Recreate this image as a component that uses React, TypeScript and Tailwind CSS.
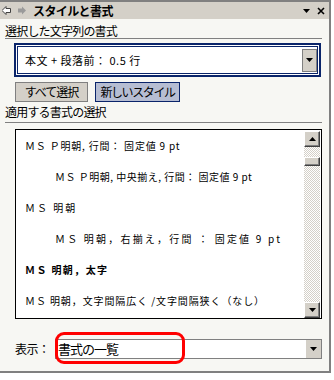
const jp = "font-['Noto_Sans_CJK_JP',sans-serif]";

function Down({ size = 7 }: { size?: number }) {
  return (
    <svg width={size} height={Math.ceil(size / 2)} viewBox="0 0 7 4">
      <polygon points="0,0 7,0 3.5,4" fill="#000" />
    </svg>
  );
}

function Up() {
  return (
    <svg width="7" height="4" viewBox="0 0 7 4">
      <polygon points="0,4 7,4 3.5,0" fill="#000" />
    </svg>
  );
}

const scrollBtn =
  "h-[16px] w-[16px] flex items-center justify-center bg-[#d4d0c8] border border-t-white border-l-white border-r-[#404040] border-b-[#404040] shadow-[inset_-1px_-1px_#808080]";

const items = [
  { text: "ＭＳ Ｐ明朝, 行間： 固定値 9 pt", indent: false, cls: "tracking-[0.8px]" },
  { text: "ＭＳ Ｐ明朝, 中央揃え, 行間： 固定値 9 pt", indent: true, cls: "tracking-[0.5px]" },
  { text: "ＭＳ 明朝", indent: false, cls: "tracking-[2px]" },
  { text: "ＭＳ 明朝，右揃え，行間 ： 固定値 9 pt", indent: true, cls: "tracking-[2.2px]" },
  { text: "ＭＳ 明朝，太字", indent: false, cls: "tracking-[1.4px] font-bold" },
  { text: "ＭＳ 明朝，文字間隔広く /文字間隔狭く（なし）", indent: false, cls: "tracking-[0.9px]" },
];

export default function App() {
  return (
    <div className={`relative w-[334px] h-[380px] overflow-hidden bg-white text-black ${jp}`}>
      <div className="w-[331px] h-[373px] border-t-2 border-r-2 border-b-2 border-[#808080] bg-[#f7f7f3] flex flex-col">
        {/* Title bar */}
        <div className="h-[17px] bg-[#d4d0c8] flex items-center shrink-0">
          <svg className="ml-[2px]" width="9" height="9" viewBox="0 0 9 9">
            <polygon points="0,4.5 4,0.5 4,2.5 8.5,2.5 8.5,6.5 4,6.5 4,8.5" fill="#ffffff" stroke="#404040" strokeWidth="1" />
          </svg>
          <svg className="ml-[7px]" width="8" height="9" viewBox="0 0 8 9">
            <polygon points="8,4.5 4,0.5 4,2.5 0,2.5 0,6.5 4,6.5 4,8.5" fill="#9a9a9a" />
          </svg>
          <span className="ml-[7px] text-[12px] leading-[14px] font-bold tracking-[-0.6px]">スタイルと書式</span>
          <span className="ml-auto mr-[7px] flex items-center">
            <Down />
          </span>
          <svg className="mr-[4px]" width="8" height="8" viewBox="0 0 8 8">
            <path d="M1 1 L7 7 M7 1 L1 7" stroke="#000" strokeWidth="1.6" />
          </svg>
        </div>

        {/* Section 1 */}
        <div className="ml-[5px] w-[317px] h-[20px] border-b border-[#808080] pt-[5px] text-[12px] leading-[14px] tracking-[-0.8px] shrink-0">
          選択した文字列の書式
        </div>
        <div className="ml-[14px] mt-[4px] w-[307px] h-[34px] border-2 border-[#0a246a] bg-white p-px shrink-0">
          <div className="h-full border border-[#0a246a] flex items-center pl-[7px]">
            <span className="text-[11px] leading-[14px] tracking-[0.5px]">本文 + 段落前： 0.5 行</span>
            <div className="ml-auto h-[23px] w-[15px] bg-[#d4d0c8] border border-[#808080] flex items-center justify-center">
              <Down />
            </div>
          </div>
        </div>
        <div className="ml-[15px] mt-[5px] flex gap-[7px] shrink-0">
          <div className="w-[73px] h-[20px] bg-[#d4d0c8] border border-[#808080] flex items-center justify-center text-[12px] leading-[14px] tracking-[-1px]">
            すべて選択
          </div>
          <div className="w-[85px] h-[20px] bg-[#b6bdd2] border border-[#0a246a] flex items-center justify-center text-[12px] leading-[14px] tracking-[-1.4px]">
            新しいスタイル
          </div>
        </div>

        {/* Section 2 */}
        <div className="ml-[5px] w-[317px] h-[21px] border-b border-[#808080] pt-[3px] text-[12px] leading-[14px] tracking-[-0.8px] shrink-0">
          適用する書式の選択
        </div>
        <div className="ml-[15px] mt-[6px] w-[307px] h-[190px] border border-black bg-white flex shrink-0">
          <div className="flex-1 flex flex-col">
            {items.map((it, i) => (
              <div
                key={i}
                className={`h-[31px] flex items-center whitespace-nowrap text-[10px] leading-[12px] ${it.indent ? "pl-[39px]" : "pl-[9px]"} ${it.cls}`}
              >
                {it.text}
              </div>
            ))}
          </div>
          <div className="mt-px mr-px w-[16px] h-[187px] flex flex-col">
            <div className={scrollBtn}>
              <Up />
            </div>
            <div className="flex-1 bg-[repeating-conic-gradient(#d4d0c8_0_25%,#ffffff_0_50%)] bg-[length:2px_2px]">
              <div className="mt-[10px] h-[9px] w-[16px] bg-[#d4d0c8] border border-t-white border-l-white border-r-[#404040] border-b-[#404040] shadow-[inset_-1px_-1px_#808080]" />
            </div>
            <div className={scrollBtn}>
              <Down />
            </div>
          </div>
        </div>

        {/* Display row */}
        <div className="ml-[15px] mt-[20px] h-[20px] flex items-center shrink-0">
          <span className="w-[40px] text-[12px] leading-[14px] tracking-[-0.5px]">表示：</span>
          <div className="w-[267px] h-[20px] border border-[#808080] bg-white flex items-center">
            <span className="pl-[2px] text-[13px] leading-[16px] tracking-[-1px]">書式の一覧</span>
            <div className="ml-auto h-full w-[15px] bg-[#d4d0c8] flex items-center justify-center">
              <Down />
            </div>
          </div>
        </div>
      </div>

      {/* Highlight */}
      <div className="absolute left-[55px] top-[332px] w-[130px] h-[32px] border-[3px] border-[#ff0000] rounded-[9px]" />
    </div>
  );
}
